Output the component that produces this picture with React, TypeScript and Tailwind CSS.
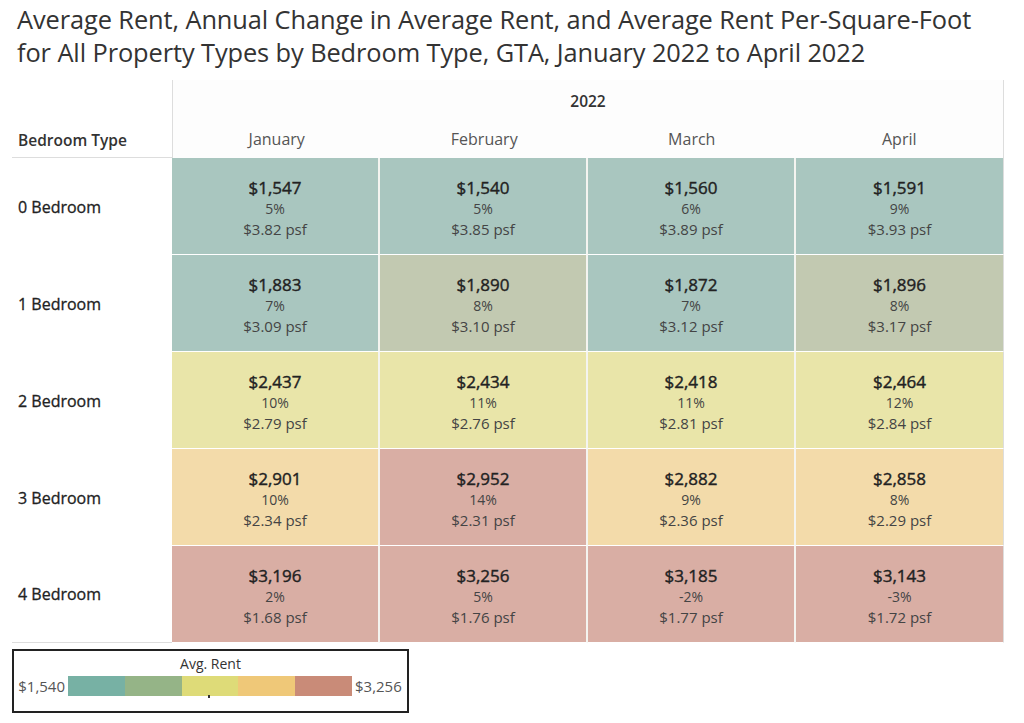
const months = ['January', 'February', 'March', 'April']

type Cell = { rent: string; change: string; psf: string; bg: string }

const TEAL = 'bg-[#a9c6bf]'
const SAGE = 'bg-[#c2c9b1]'
const YELLOW = 'bg-[#e9e5a9]'
const PEACH = 'bg-[#f3dbaa]'
const ROSE = 'bg-[#d9aea4]'

const rows: { label: string; cells: Cell[] }[] = [
  {
    label: '0 Bedroom',
    cells: [
      { rent: '$1,547', change: '5%', psf: '$3.82 psf', bg: TEAL },
      { rent: '$1,540', change: '5%', psf: '$3.85 psf', bg: TEAL },
      { rent: '$1,560', change: '6%', psf: '$3.89 psf', bg: TEAL },
      { rent: '$1,591', change: '9%', psf: '$3.93 psf', bg: TEAL },
    ],
  },
  {
    label: '1 Bedroom',
    cells: [
      { rent: '$1,883', change: '7%', psf: '$3.09 psf', bg: TEAL },
      { rent: '$1,890', change: '8%', psf: '$3.10 psf', bg: SAGE },
      { rent: '$1,872', change: '7%', psf: '$3.12 psf', bg: TEAL },
      { rent: '$1,896', change: '8%', psf: '$3.17 psf', bg: SAGE },
    ],
  },
  {
    label: '2 Bedroom',
    cells: [
      { rent: '$2,437', change: '10%', psf: '$2.79 psf', bg: YELLOW },
      { rent: '$2,434', change: '11%', psf: '$2.76 psf', bg: YELLOW },
      { rent: '$2,418', change: '11%', psf: '$2.81 psf', bg: YELLOW },
      { rent: '$2,464', change: '12%', psf: '$2.84 psf', bg: YELLOW },
    ],
  },
  {
    label: '3 Bedroom',
    cells: [
      { rent: '$2,901', change: '10%', psf: '$2.34 psf', bg: PEACH },
      { rent: '$2,952', change: '14%', psf: '$2.31 psf', bg: ROSE },
      { rent: '$2,882', change: '9%', psf: '$2.36 psf', bg: PEACH },
      { rent: '$2,858', change: '8%', psf: '$2.29 psf', bg: PEACH },
    ],
  },
  {
    label: '4 Bedroom',
    cells: [
      { rent: '$3,196', change: '2%', psf: '$1.68 psf', bg: ROSE },
      { rent: '$3,256', change: '5%', psf: '$1.76 psf', bg: ROSE },
      { rent: '$3,185', change: '-2%', psf: '$1.77 psf', bg: ROSE },
      { rent: '$3,143', change: '-3%', psf: '$1.72 psf', bg: ROSE },
    ],
  },
]

const legendSteps = ['bg-[#77b1a4]', 'bg-[#95b487]', 'bg-[#dedb78]', 'bg-[#efc878]', 'bg-[#c98b78]']

function Legend() {
  return (
    <div className="ml-[12px] mt-[6px] h-[64px] w-[397px] border-2 border-[#222] pt-[3px]">
      <div className="text-center text-[14px] leading-[19px] text-[#333]">Avg. Rent</div>
      <div className="mt-[2px] flex items-center">
        <span className="w-[51px] text-right text-[15px] text-[#555]">$1,540</span>
        <div className="relative ml-[3px] flex h-[20px] w-[284px]">
          {legendSteps.map((bg) => (
            <div key={bg} className={`h-full flex-1 ${bg}`} />
          ))}
          <div className="absolute left-[140px] top-[19px] h-[3px] w-[2px] bg-[#333]" />
        </div>
        <span className="ml-[3px] text-[15px] text-[#555]">$3,256</span>
      </div>
    </div>
  )
}

export default function App() {
  return (
    <div className="h-[723px] w-[1024px] bg-white font-['Open_Sans',sans-serif] text-[#333]">
      <h1 className="px-[17px] pt-[3px] text-[25.4px] font-normal leading-[33px] tracking-[-0.1px] text-[#333]">
        Average Rent, Annual Change in Average Rent, and Average Rent Per-Square-Foot
        <br />
        for All Property Types by Bedroom Type, GTA, January 2022 to April 2022
      </h1>

      <div className="ml-[12px] mt-[11px] grid w-[992px] grid-cols-[160px_repeat(4,208px)]">
        {/* header */}
        <div className="flex h-[78px] items-end border-b border-[#ddd] pb-[5px] pl-[6px] text-[15.5px] font-semibold text-[#333]">
          Bedroom Type
        </div>
        <div className="col-span-4 flex h-[78px] flex-col border-l border-r border-[#ddd] bg-[#fdfdfd]">
          <div className="pt-[11px] text-center text-[15.5px] font-semibold leading-[20px]">2022</div>
          <div className="mt-[18px] grid grid-cols-4 text-[16px] leading-[20px] text-[#555]">
            {months.map((m) => (
              <div key={m} className="text-center">
                {m}
              </div>
            ))}
          </div>
        </div>

        {rows.map((row, r) => (
          <div key={row.label} className="contents">
            <div
              className={`flex h-[97px] items-center pl-[6px] text-[16px] text-[#222] [-webkit-text-stroke:0.3px_#222] ${
                r === rows.length - 1 ? 'border-b border-[#ddd]' : ''
              }`}
            >
              {row.label}
            </div>
            {row.cells.map((c, i) => (
              <div
                key={i}
                className={`flex h-[97px] flex-col items-center justify-center border-b border-white pt-[3px] ${c.bg} ${
                  i < 3 ? 'border-r-2 border-r-[#f4f4f0]' : 'border-r border-r-[#ddd]'
                }`}
              >
                <div className="text-[17px] leading-[22px] text-[#222] [-webkit-text-stroke:0.4px_#222]">{c.rent}</div>
                <div className="text-[14px] leading-[20px] text-[#444]">{c.change}</div>
                <div className="text-[15px] leading-[20px] text-[#444]">{c.psf}</div>
              </div>
            ))}
          </div>
        ))}
      </div>

      <Legend />
    </div>
  )
}
